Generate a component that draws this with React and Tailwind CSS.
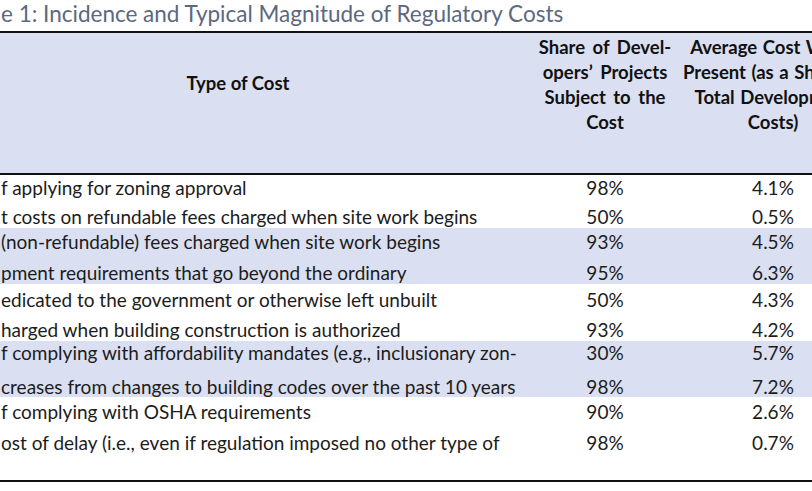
import React from "react";

const rows = [
  { t: "f applying for zoning approval", a: "98%", b: "4.1%", h: "h-[28px]", pt: "pt-[3px]", hl: false },
  { t: "t costs on refundable fees charged when site work begins", a: "50%", b: "0.5%", h: "h-[25px]", pt: "pt-[4px]", hl: false },
  { t: "(non-refundable) fees charged when site work begins", a: "93%", b: "4.5%", h: "h-[28px]", pt: "pt-[4px]", hl: true },
  { t: "pment requirements that go beyond the ordinary", a: "95%", b: "6.3%", h: "h-[28px]", pt: "pt-[7px]", hl: true },
  { t: "edicated to the government or otherwise left unbuilt", a: "50%", b: "4.3%", h: "h-[30px]", pt: "pt-[6px]", hl: false },
  { t: "harged when building construction is authorized", a: "93%", b: "4.2%", h: "h-[27px]", pt: "pt-[6px]", hl: false },
  { t: "f complying with affordability mandates (e.g., inclusionary zon-", a: "30%", b: "5.7%", h: "h-[28px]", pt: "pt-[2px]", hl: true },
  { t: "creases from changes to building codes over the past 10 years", a: "98%", b: "7.2%", h: "h-[28px]", pt: "pt-[8px]", hl: true },
  { t: "f complying with OSHA requirements", a: "90%", b: "2.6%", h: "h-[30px]", pt: "pt-[5px]", hl: false },
  { t: "ost of delay (i.e., even if regulation imposed no other type of", a: "98%", b: "0.7%", h: "h-[53px]", pt: "pt-[6px]", hl: false },
];

export default function App() {
  return (
    <div className="w-[812px] h-[491px] overflow-hidden bg-white font-['Lato','Liberation_Sans',sans-serif] text-[#1c1c1c]">
      <div className="w-[900px]">
        <div className="h-[31px] flex items-center pl-[1px] text-[22.5px] font-normal leading-none text-[#5b6880] whitespace-nowrap pb-[2px]">
          e 1: Incidence and Typical Magnitude of Regulatory Costs
        </div>
        <div className="border-t-2 border-b-2 border-[#111] bg-[#dae0f1] h-[144px] pt-[2px]">
          <div className="flex items-center font-bold text-[18.5px] leading-[25px] text-[#111]">
            <div className="w-[536px] text-center pr-[60px] pb-[3px]">Type of Cost</div>
            <div className="w-[138px] text-center whitespace-nowrap [word-spacing:3px]">
              Share of Devel-<br />opers’ Projects<br />Subject to the<br />Cost
            </div>
            <div className="w-[198px] text-center whitespace-nowrap [word-spacing:1px]">
              Average Cost When<br />Present (as a Share of<br />Total Development<br />Costs)
            </div>
          </div>
        </div>
        {rows.map((r, i) => (
          <div key={i} className={`flex text-[19px] leading-[20px] ${r.h} ${r.pt} ${r.hl ? "bg-[#dae0f1]" : ""}`}>
            <div className="w-[536px] pl-[1px] whitespace-nowrap overflow-hidden">{r.t}</div>
            <div className="w-[138px] text-center">{r.a}</div>
            <div className="w-[78px] ml-[60px] text-center">{r.b}</div>
          </div>
        ))}
        <div className="border-t-2 border-[#111]" />
      </div>
    </div>
  );
}
